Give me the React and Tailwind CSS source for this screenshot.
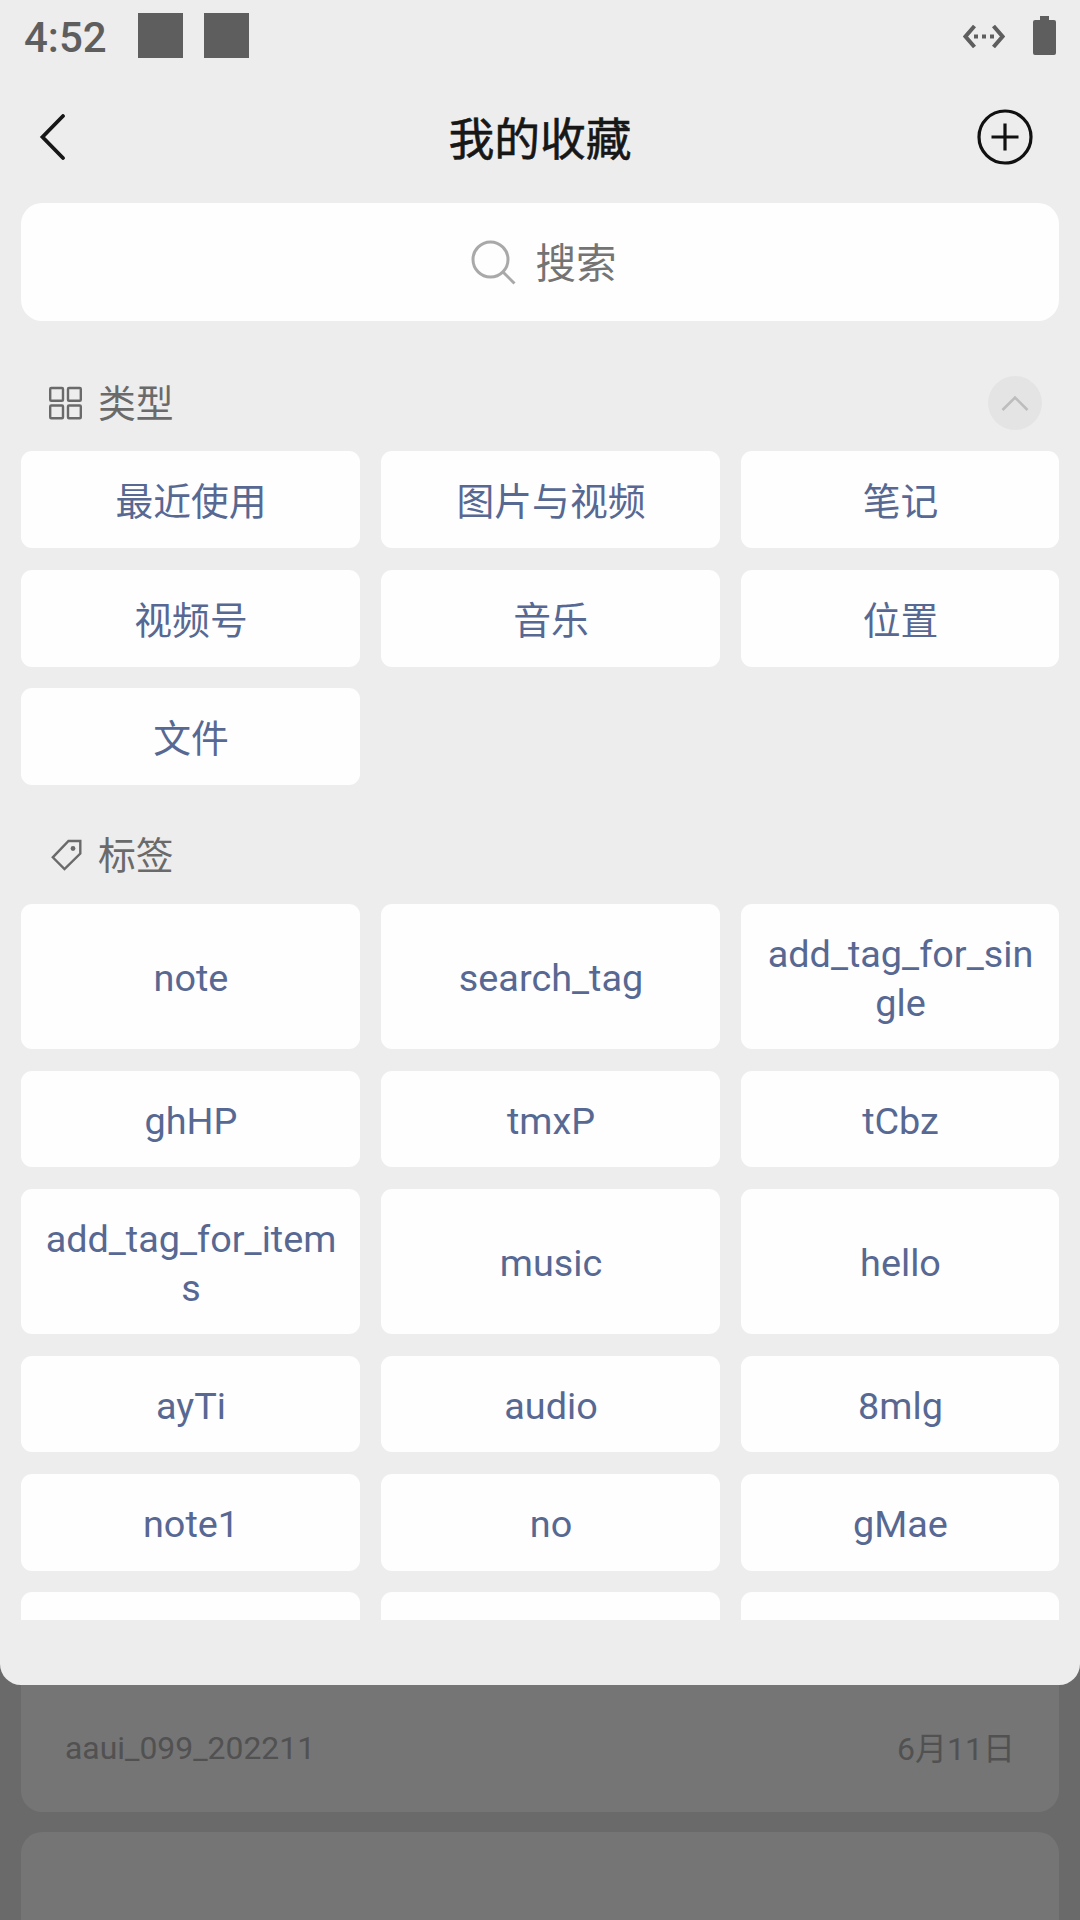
import React from "react";

const types = ["最近使用", "图片与视频", "笔记", "视频号", "音乐", "位置", "文件"];

const tagRows = [
  { height: "h-[145px]", items: ["note", "search_tag", "add_tag_for_single"] },
  { height: "h-[96.500px]", items: ["ghHP", "tmxP", "tCbz"] },
  { height: "h-[145px]", items: ["add_tag_for_items", "music", "hello"] },
  { height: "h-[96.500px]", items: ["ayTi", "audio", "8mlg"] },
  { height: "h-[96.500px]", items: ["note1", "no", "gMae"] },
  { height: "h-[96.500px]", items: ["", "", ""] },
];

function Chip({ label, height, shift }) {
  return (
    <button
      className={`flex items-center justify-center rounded-[11px] bg-[#fefefe] pl-[24px] pr-[23px] text-center text-[37.8px] leading-[49px] text-[#576893] ${height}`}
    >
      <span className={`min-w-0 break-all ${shift}`}>{label}</span>
    </button>
  );
}

function StatusBar() {
  return (
    <div className="flex h-[71px] shrink-0 items-center pl-[24px] pr-[24px] text-[#5e5e5e]">
      <span className="w-[114px] translate-y-[2px] text-[42px] font-medium leading-none">4:52</span>
      <div className="flex gap-[21px]">
        <div className="h-[45px] w-[45px] bg-[#5e5e5e]" />
        <div className="h-[45px] w-[45px] bg-[#5e5e5e]" />
      </div>
      <div className="ml-auto flex items-center gap-[28px]">
        <svg className="h-[24px] w-[42px] translate-y-[0.5px]" viewBox="0 0 42 24" fill="none" stroke="currentColor" strokeWidth="4">
          <path d="M11.5 1.5 2.5 12l9 10.5M30.500 1.500 39.500 12l-9 10.500" />
          <path d="M11 12h4M19 12h4M27 12h4" />
        </svg>
        <svg className="h-[39px] w-[23px]" viewBox="0 0 23 39" fill="currentColor">
          <path d="M7 0h9v4h5a2 2 0 0 1 2 2v31a2 2 0 0 1-2 2H2a2 2 0 0 1-2-2V6a2 2 0 0 1 2-2h5z" />
        </svg>
      </div>
    </div>
  );
}

function TitleBar() {
  return (
    <header className="flex h-[132px] shrink-0 items-start justify-between pl-[39px] pr-[47px] pt-[38px]">
      <svg className="mt-[5px] h-[46px] w-[64px]" viewBox="0 0 64 46" fill="none" stroke="#171717" strokeWidth="3.8" strokeLinecap="round">
        <path d="M24 2 3.500 23 24 44" />
      </svg>
      <h1 className="mt-[4px] text-[45.8px] font-normal leading-[56px] text-[#171717] [-webkit-text-stroke:0.6px_#171717]">
        我的收藏
      </h1>
      <svg className="h-[56px] w-[56px]" viewBox="0 0 56 56" fill="none" stroke="#111" strokeWidth="3.2">
        <circle cx="28" cy="28" r="26" />
        <path d="M28 14.500v27M14.500 28h27" />
      </svg>
    </header>
  );
}

function SearchBox() {
  return (
    <div className="mx-[21px] flex h-[118px] shrink-0 items-center justify-center gap-[20px] rounded-[21px] bg-[#fefefe] pl-[7px]">
      <svg className="h-[45px] w-[45px]" viewBox="0 0 45 45" fill="none" stroke="#a9a9a9" strokeWidth="3">
        <circle cx="19.500" cy="19.500" r="17.500" />
        <path d="m32 32 11.500 11.500" />
      </svg>
      <span className="translate-y-[2px] text-[40.5px] leading-[56px] text-[#747474]">搜索</span>
    </div>
  );
}

function SectionHeading({ icon, label, children }) {
  return (
    <div className="flex h-[54px] shrink-0 items-center pl-[48px] pr-[38px] text-[#6a6a6a]">
      {icon}
      <h2 className="ml-[16px] translate-y-px text-[37.8px] leading-[54px]">{label}</h2>
      {children}
    </div>
  );
}

function GridIcon() {
  return (
    <svg className="h-[34px] w-[34px]" viewBox="0 0 34 34" fill="none" stroke="currentColor" strokeWidth="2.400">
      <rect x="2.200" y="2" width="12.800" height="12.800" rx="1" />
      <rect x="20" y="2" width="12.800" height="12.800" rx="1" />
      <rect x="2.200" y="19.500" width="12.800" height="12.800" rx="1" />
      <rect x="20" y="19.500" width="12.800" height="12.800" rx="1" />
    </svg>
  );
}

function TagIcon() {
  return (
    <svg className="h-[34px] w-[34px]" viewBox="0 0 34 34" fill="none" stroke="currentColor" strokeWidth="2.400">
      <path d="M20.500 3h11.800v12.500L16.500 31 4.800 19.300z" />
      <circle cx="25" cy="10.500" r="2.400" fill="currentColor" stroke="none" />
    </svg>
  );
}

export default function App() {
  return (
    <div className='relative h-[1920px] w-[1080px] overflow-hidden bg-[#6a6a6a] font-["Roboto","Noto_Sans_CJK_SC",sans-serif]'>
      <main className="flex h-full flex-col justify-end gap-[20px] px-[21px] text-[#515151]">
        <article className="flex h-[190px] items-end justify-between rounded-[21px] bg-[#757575] px-[44px] pb-[42px] text-[31.9px] leading-[44px]">
          <span>aaui_099_202211</span>
          <span className="translate-y-px text-[32px]">6月11日</span>
        </article>
        <article className="h-[88px] rounded-t-[21px] bg-[#757575]" />
      </main>

      <section className="absolute inset-x-0 top-0 flex h-[1685px] flex-col rounded-b-[21px] bg-[#ededed]">
        <StatusBar />
        <TitleBar />
        <SearchBox />
        <div className="mt-[55px] flex h-[1244px] shrink-0 flex-col overflow-hidden">
          <SectionHeading icon={<GridIcon />} label="类型">
            <button className="ml-auto flex h-[54px] w-[54px] items-center justify-center rounded-full bg-[#e4e4e4]">
              <svg className="h-[16px] w-[28px]" viewBox="0 0 28 16" fill="none" stroke="#bdbdbd" strokeWidth="2.600">
                <path d="M1.500 15 14 2.500 26.500 15" />
              </svg>
            </button>
          </SectionHeading>
          <div className="mt-[21px] grid shrink-0 grid-cols-[339px_339px_318px] gap-x-[21px] gap-y-[21.500px] px-[21px]">
            {types.map((label) => (
              <Chip key={label} label={label} height="h-[97px]" shift="translate-y-[3px]" />
            ))}
          </div>
          <div className="h-[43px] shrink-0" />
          <SectionHeading icon={<TagIcon />} label="标签" />
          <div className="mt-[22px] grid shrink-0 grid-cols-[339px_339px_318px] gap-x-[21px] gap-y-[21.800px] px-[21px]">
            {tagRows.map((row, r) =>
              row.items.map((label, c) => (
                <Chip key={`${r}-${c}`} label={label} height={row.height} shift="translate-y-[2px]" />
              ))
            )}
          </div>
        </div>
      </section>
    </div>
  );
}
